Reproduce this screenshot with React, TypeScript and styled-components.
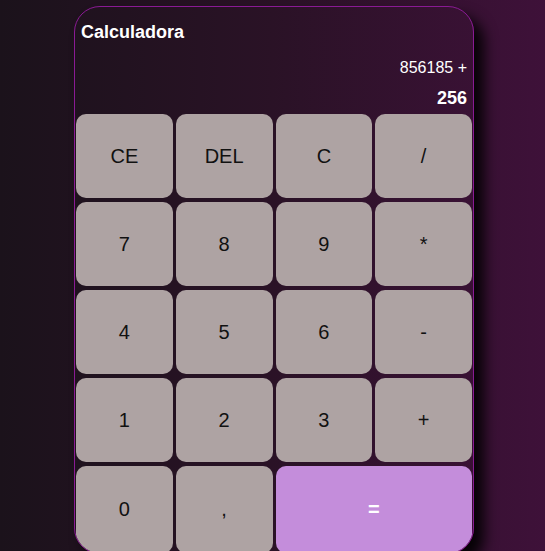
import styled, { createGlobalStyle } from "styled-components";

const GlobalStyle = createGlobalStyle`
  html, body {
    margin: 0;
    height: 100%;
  }
  body {
    background: linear-gradient(to right, #1b121b 0%, #2a1226 50%, #3e1139 100%);
    font-family: "Liberation Sans", Arial, sans-serif;
    overflow: hidden;
  }
`;

const Page = styled.div`
  display: flex;
  justify-content: center;
  padding-top: 6px;
  padding-left: 3px;
`;

const Calculator = styled.div`
  width: 400px;
  height: 548px;
  flex-shrink: 0;
  box-sizing: border-box;
  border: 1px solid #8a1a94;
  border-radius: 26px;
  overflow: hidden;
  box-shadow: 10px 10px 14px rgba(0, 0, 0, 0.9);
  display: flex;
  flex-direction: column;
`;

const Title = styled.h1`
  margin: 0;
  padding: 15px 6px 0;
  font-size: 18px;
  font-weight: bold;
  color: #ffffff;
  line-height: 20px;
`;

const Display = styled.div`
  display: flex;
  flex-direction: column;
  align-items: flex-end;
  padding: 17px 6px 6px;
  color: #ffffff;
`;

const Previous = styled.div`
  font-size: 16px;
  line-height: 18px;
`;

const Current = styled.div`
  margin-top: 11px;
  font-size: 18px;
  font-weight: bold;
  line-height: 20px;
`;

const Keys = styled.div`
  flex: 1;
  display: grid;
  grid-template-columns: repeat(4, 1fr);
  grid-template-rows: repeat(4, 84px) 1fr;
  column-gap: 3px;
  row-gap: 4px;
  padding: 0 1px;
`;

const Key = styled.button<{ $accent?: boolean; $wide?: boolean }>`
  border: none;
  border-radius: 10px;
  font-family: inherit;
  font-size: 20px;
  cursor: pointer;
  grid-column: ${(p) => (p.$wide ? "span 2" : "auto")};
  background: ${(p) => (p.$accent ? "#c48ddb" : "#aea3a3")};
  color: ${(p) => (p.$accent ? "#ffffff" : "#111111")};
  font-weight: ${(p) => (p.$accent ? "bold" : "normal")};
`;

const keys = ["CE", "DEL", "C", "/", "7", "8", "9", "*", "4", "5", "6", "-", "1", "2", "3", "+", "0", ","];

export default function App() {
  return (
    <>
      <GlobalStyle />
      <Page>
        <Calculator>
          <Title>Calculadora</Title>
          <Display>
            <Previous>856185 +</Previous>
            <Current>256</Current>
          </Display>
          <Keys>
            {keys.map((k) => (
              <Key key={k}>{k}</Key>
            ))}
            <Key $accent $wide>
              =
            </Key>
          </Keys>
        </Calculator>
      </Page>
    </>
  );
}
